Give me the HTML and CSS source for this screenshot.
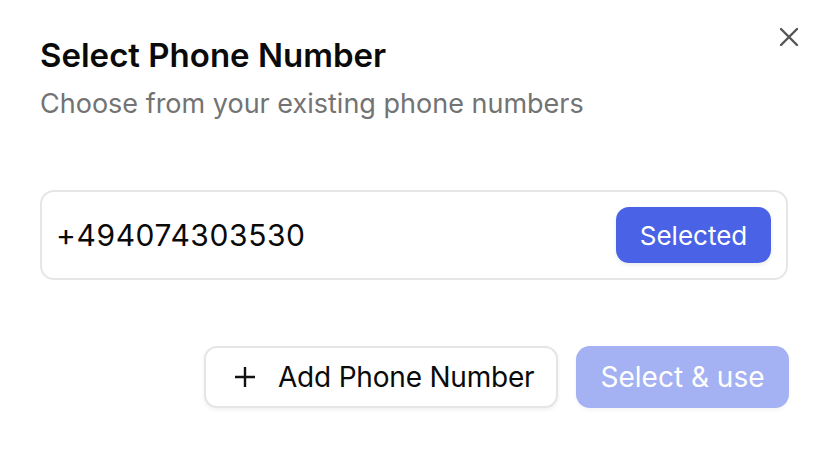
FILE: index.html
```html
<!DOCTYPE html>
<html>
<head>
<meta charset="utf-8">
<link rel="stylesheet" href="styles.css">
</head>
<body>
<div class="dialog">
  <button class="close" aria-label="Close">
    <svg width="20" height="20" viewBox="0 0 20 20"><path d="M2 2L18 18M18 2L2 18" stroke="#555" stroke-width="2.4" stroke-linecap="round"/></svg>
  </button>
  <header class="head">
    <h1 class="title">Select Phone Number</h1>
    <p class="subtitle">Choose from your existing phone numbers</p>
  </header>
  <div class="card">
    <span class="number">+494074303530</span>
    <button class="btn-selected">Selected</button>
  </div>
  <div class="actions">
    <button class="btn-outline">
      <svg width="22" height="22" viewBox="0 0 22 22"><path d="M11 1V21M1 11H21" stroke="#111" stroke-width="2.4"/></svg>
      <span>Add Phone Number</span>
    </button>
    <button class="btn-primary" disabled>Select &amp; use</button>
  </div>
</div>
</body>
</html>
```
FILE: styles.css
```css
* { box-sizing: border-box; }
html, body { margin: 0; background: #fff; }
body { font-family: Inter, "Noto Sans", sans-serif; color: #0a0a0a; }
.dialog {
  position: relative;
  width: 832px;
  height: 450px;
  padding: 35px 43px 0 40px;
}
.close {
  position: absolute;
  top: 27px;
  right: 33px;
  background: none;
  border: 0;
  padding: 0;
  width: 20px;
  height: 20px;
}
.close svg { display: block; }
.head { display: flex; flex-direction: column; gap: 11px; }
.title {
  margin: 0;
  font-size: 33px;
  line-height: 40px;
  font-weight: 600;
}
.subtitle {
  margin: 0;
  font-size: 27px;
  line-height: 36px;
  color: #737373;
}
.card {
  margin-top: 68px;
  margin-right: 1px;
  height: 90px;
  border: 2px solid #e6e6e6;
  border-radius: 14px;
  display: flex;
  align-items: center;
  justify-content: space-between;
  padding: 0 15px 0 14px;
}
.number { font-size: 30px; letter-spacing: 0.6px; }
.btn-selected {
  background: #4a63e6;
  color: #fff;
  border: 0;
  border-radius: 13px;
  height: 56px;
  width: 155px;
  padding: 0;
  font-family: inherit;
  font-size: 26px;
  box-shadow: 0 2px 4px rgba(0,0,0,0.08);
}
.actions {
  margin-top: 66px;
  display: flex;
  justify-content: flex-end;
  gap: 18px;
}
.btn-outline {
  height: 62px;
  width: 354px;
  background: #fff;
  border: 2px solid #e5e5e5;
  border-radius: 13px;
  padding: 0 0 0 28px;
  display: flex;
  align-items: center;
  gap: 22px;
  font-family: inherit;
  font-size: 28px;
  letter-spacing: -0.2px;
  color: #0a0a0a;
  box-shadow: 0 2px 4px rgba(0,0,0,0.06);
}
.btn-primary {
  height: 62px;
  width: 213px;
  background: #a4b1f2;
  color: #fff;
  border: 0;
  border-radius: 14px;
  padding: 0;
  font-family: inherit;
  font-size: 28px;
  box-shadow: 0 2px 4px rgba(0,0,0,0.05);
}
```
